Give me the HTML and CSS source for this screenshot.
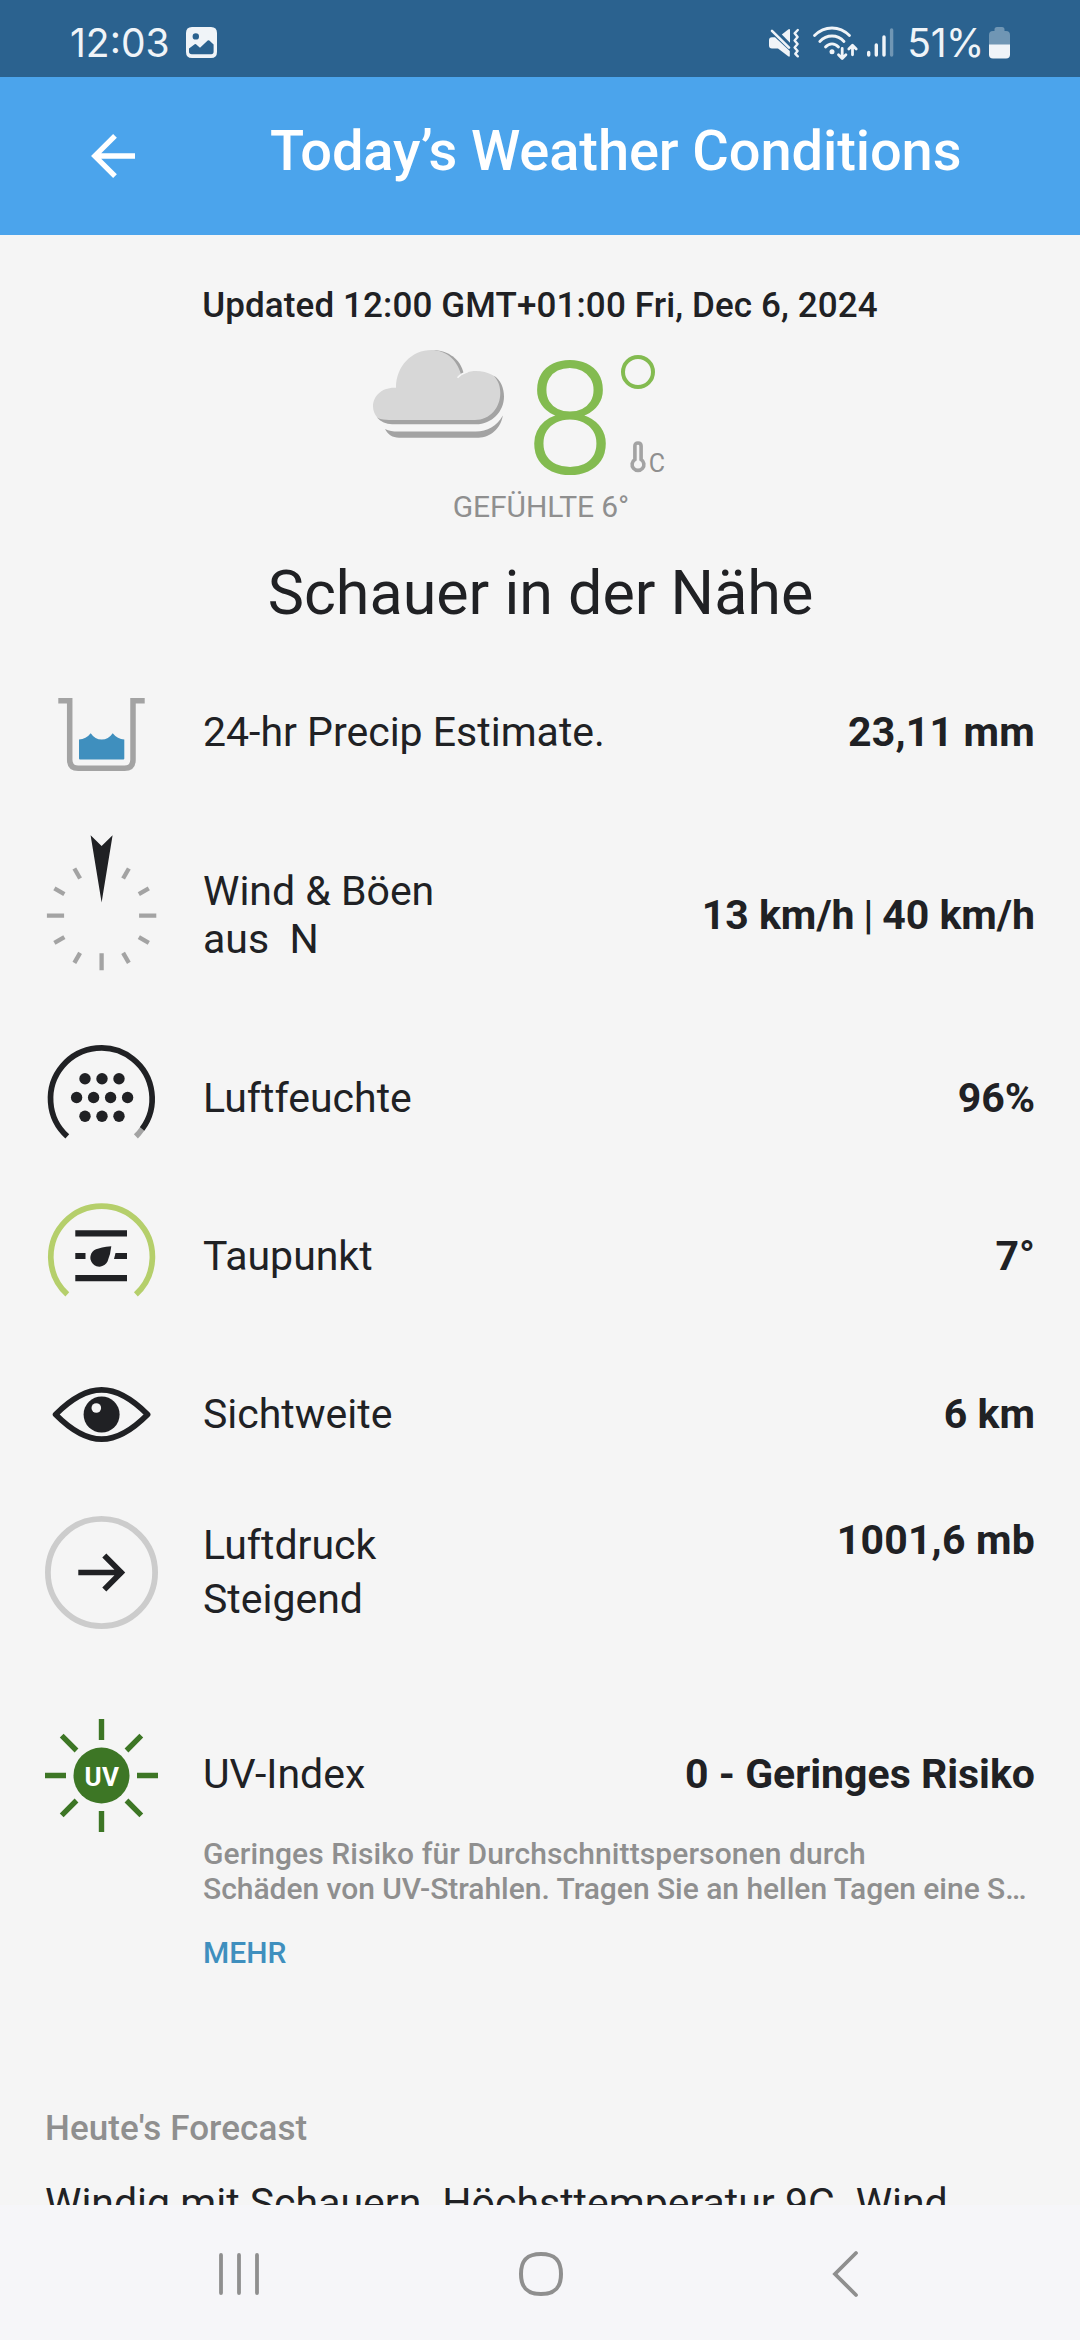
FILE: index.html
```html
<!DOCTYPE html>
<html lang="de">
<head>
<meta charset="utf-8">
<title>Today’s Weather Conditions</title>
<link rel="stylesheet" href="styles.css">
</head>
<body>
<div class="screen">
  <div class="status">
    <span class="status-text">12:03</span>
    <svg class="photo" width="31" height="31" viewBox="0 0 31 31">
      <path fill="#f0f4f8" fill-rule="evenodd" d="M6 0H25Q31 0 31 6V25Q31 31 25 31H6Q0 31 0 25V6Q0 0 6 0ZM9.8 6.2A3.2 3.2 0 1 0 9.8 12.6A3.2 3.2 0 1 0 9.8 6.2ZM3 21.5V24.5Q3 27.2 5.700 27.200H25.3Q27.600 27.200 27.600 24.500V17.5L23.3 13.6Q22.500 13 21.700 13.600L14 20.800L10 17.300Q9.400 16.800 8.700 17.300Z"/>
    </svg>
    <div class="status-right">
      <svg width="34" height="32" viewBox="0 0 34 32">
        <g fill="#f0f4f8"><path d="M5 10.300H8L22.800 24V29.500L21.500 29.500L11 21.500H5Q2 21.500 2 18.500V13.300Q2 10.300 5 10.300Z"/><path d="M14.800 7.600L21.500 2.300H23V15.800Z"/></g>
        <g fill="none" stroke="#f0f4f8" stroke-width="2.600" stroke-linecap="round" stroke-linejoin="round"><path d="M5 3.900L22 20.600"/><path d="M30.800 3L27.600 6.300L30.600 10L27.600 13.500L30.600 17L27.600 20.500L30.600 24L28.300 26.800L30.800 29.300" stroke-width="2.400"/></g>
      </svg>
      <svg class="wifi" width="46" height="36" viewBox="0 0 46 36">
        <g fill="none" stroke="#f0f4f8" stroke-width="2.800" stroke-linecap="round" stroke-linejoin="round"><path d="M2.500 10.600Q10 3 20 3T37.500 10.600"/><path d="M7.800 16.500Q13 11 20 11T32 16.500"/><path d="M13.500 22Q16.300 18.800 20 18.800T26.500 22"/><path d="M30.200 23.500V33M26.500 29.800L30.200 33.500L33.900 29.800M40.500 29.800V20.500M36.800 24L40.500 20.300L44.200 24"/></g>
        <circle cx="20" cy="26.800" r="2.500" fill="#f0f4f8"/>
      </svg>
      <svg class="signal" width="28" height="32" viewBox="0 0 28 32">
        <g stroke="#f0f4f8" stroke-width="3.400" stroke-linecap="round"><path d="M2.700 25.500V28M10.300 18V28M18 10V28"/><path d="M25.600 3V28" stroke="#7096b4"/></g>
      </svg>
      <span class="status-text percent">51%</span>
      <svg width="21" height="32" viewBox="0 0 21 32">
        <path fill="#7096b4" d="M5.500 2.500Q5.500 0 8 0H13Q15.500 0 15.500 2.500V4H17Q21 4 21 8V18H0V8Q0 4 4 4H5.500Z"/>
        <path fill="#f0f4f8" d="M0 17.500H21V27.500Q21 31.500 17 31.500H4Q0 31.500 0 27.500Z"/>
      </svg>
    </div>
  </div>

  <header class="appbar">
    <svg width="46" height="44" viewBox="0 0 46 44"><path fill="none" stroke="#fff" stroke-width="5.300" d="M25 1.800L4.800 22L25 42.200M4.800 22H45"/></svg>
    <h1>Today’s Weather Conditions</h1>
  </header>

  <main>
    <div class="updated">Updated 12:00 GMT+01:00 Fri, Dec 6, 2024</div>
    <div class="current">
      <svg class="cloud" width="134" height="92" viewBox="0 0 134 92">
        <path fill="#a3a3a3" d="M60 1C77 1 88.500 11 91.500 23.800L89 26L57 10Z"/>
        <path fill="#a3a3a3" d="M5 68.500C9 73 14 75.300 20 75.300H104C120 75.300 132 62.500 132 47.500C132 38.500 128.500 31.500 122.500 27L100 60Z"/>
        <path fill="#a3a3a3" d="M13 80C17 82.300 21 82.500 26 82.500H104C115 82.500 125 77 130.800 66.500C129 79 118.500 88.700 106.500 88.700H27C20.500 88.700 16 85.500 13 80Z"/>
        <path fill="#d7d7d7" d="M17 71H103C118 71 128.300 58.500 128.300 44C128.300 37 126 31 121.500 26.500C115.500 23.300 110 22 104 22C97 22 90 24.500 85.500 28.800L89 25.300C85 10.500 73.500 1 59.500 1C40 1 24 17 24 38.700C10 37.800 1 47 1 57.500C1 62 3 66.500 6.300 69.300C9 70.600 13 71 17 71Z"/>
        <path fill="none" stroke="#f5f5f5" stroke-width="1.600" d="M85.500 28.800Q89.500 24.500 96 22.600"/>
      </svg>
      <span class="temp">8</span>
      <div class="unit">
        <svg class="degree" width="34" height="34" viewBox="0 0 34 34"><circle cx="17" cy="17" r="15" fill="none" stroke="#83bb50" stroke-width="4"/></svg>
        <div class="scale">
          <svg width="16" height="32" viewBox="0 0 16 32"><path fill="none" stroke="#a3a3a3" stroke-width="3.600" d="M4.900 18.500V5Q4.900 2 8 2T11.100 5V18.500A5.900 5.900 0 1 1 4.900 18.500Z"/></svg>
          <span>C</span>
        </div>
      </div>
    </div>
    <div class="feels">GEFÜHLTE 6°</div>
    <h2>Schauer in der Nähe</h2>

    <section class="row">
      <svg class="icon" viewBox="0 0 113 113">
        <path fill="none" stroke="#a3a3a3" stroke-width="5.500" d="M13.300 24.800H24.700V83.800Q24.700 92.300 33.200 92.300H79.500Q88 92.300 88 83.800V24.800H99.700"/>
        <path fill="#3f8fbe" d="M34 63.500Q41 63.200 45.700 57.200Q50 63.500 56.700 63.500T67.700 57.200Q72.500 63.200 79.300 63.500V82.500Q79.300 83.500 78.300 83.500H35Q34 83.500 34 82.500Z"/>
      </svg>
      <div class="label">24-hr Precip Estimate.</div>
      <div class="value spaced">23,11 mm</div>
    </section>

    <section class="row wind">
      <svg class="icon compass" viewBox="0 0 113 162">
        <g stroke="#a3a3a3" stroke-width="4.300" transform="translate(56.600 81.700)">
          <path d="M-54.700 0H-37.500M37.500 0H54.700M0 37.500V54.500"/>
          <path d="M0 43V54.500" transform="rotate(30)"/><path d="M0 43V54.500" transform="rotate(60)"/>
          <path d="M0 43V54.500" transform="rotate(120)"/><path d="M0 43V54.500" transform="rotate(150)"/>
          <path d="M0 43V54.500" transform="rotate(210)"/><path d="M0 43V54.500" transform="rotate(240)"/>
          <path d="M0 43V54.500" transform="rotate(300)"/><path d="M0 43V54.500" transform="rotate(330)"/>
        </g>
        <path fill="#202124" d="M45.600 1.300L56.600 12L67.600 1.300L56.600 68.500Z"/>
      </svg>
      <div class="label">Wind &amp; Böen<br>aus&nbsp; N</div>
      <div class="value">13 km/h <span class="bar">|</span> 40 km/h</div>
    </section>

    <section class="row">
      <svg class="icon" viewBox="0 0 113 113">
        <g fill="none" stroke-width="5.700"><path stroke="#a3a3a3" d="M97.100 87A50.800 50.800 0 0 1 90.900 94.400"/><path stroke="#202124" d="M22.300 94.400A50.800 50.800 0 1 1 97.100 87"/></g>
        <g fill="#202124"><circle cx="40" cy="36.800" r="5.700"/><circle cx="57" cy="36.800" r="5.700"/><circle cx="74" cy="36.800" r="5.700"/><circle cx="31.600" cy="55.500" r="5.700"/><circle cx="48.600" cy="55.500" r="5.700"/><circle cx="65.600" cy="55.500" r="5.700"/><circle cx="82.600" cy="55.500" r="5.700"/><circle cx="40" cy="74.200" r="5.700"/><circle cx="57" cy="74.200" r="5.700"/><circle cx="74" cy="74.200" r="5.700"/></g>
      </svg>
      <div class="label">Luftfeuchte</div>
      <div class="value">96%</div>
    </section>

    <section class="row">
      <svg class="icon" viewBox="0 0 113 113">
        <path fill="none" stroke="#b5cf6b" stroke-width="5.700" d="M22.300 94.400A50.800 50.800 0 1 1 90.900 94.400"/>
        <g fill="#202124"><path d="M30.300 30.300H82V36.500H30.300ZM30.300 75H82V81.200H30.300ZM30.300 53H40.500V59H30.300ZM70.500 53H82V59H69Z"/><path d="M66.300 46.200Q65.500 55 62.500 61.500A9 9 0 1 1 51 49.300Q55.500 47.300 66.300 46.200Z"/></g>
      </svg>
      <div class="label">Taupunkt</div>
      <div class="value">7°</div>
    </section>

    <section class="row">
      <svg class="icon" viewBox="0 0 113 113">
        <path fill="none" stroke="#202124" stroke-width="5.700" stroke-linejoin="round" d="M10.600 56.500C27 40 41 31.900 56.600 31.900S86.200 40 102.600 56.500C86.200 73 72.200 81.200 56.600 81.200S27 73 10.600 56.500Z"/>
        <circle cx="56.600" cy="56.500" r="18" fill="#202124"/><circle cx="51.300" cy="50" r="4.800" fill="#f5f5f5"/>
      </svg>
      <div class="label">Sichtweite</div>
      <div class="value">6 km</div>
    </section>

    <section class="row pressure">
      <svg class="icon" viewBox="0 0 113 113">
        <circle cx="56.500" cy="56.500" r="53.600" fill="none" stroke="#ccc" stroke-width="5.800"/>
        <path fill="none" stroke="#202124" stroke-width="5.700" d="M33.300 56.500H75M59.300 39.500L76.200 56.500L59.300 73.500"/>
      </svg>
      <div class="label">Luftdruck<br>Steigend</div>
      <div class="value spaced">1001,6 mb</div>
    </section>

    <section class="row uv">
      <svg class="icon" viewBox="0 0 113 113">
        <circle cx="56.500" cy="56.500" r="28" fill="#3d7625"/>
        <g stroke="#3d7625" stroke-width="5.400"><path d="M56.500 0V21M56.500 92V113M0 56.500H21M92 56.500H113M16.700 16.700L31.500 31.500M81.500 81.500L96.300 96.300M96.300 16.700L81.500 31.500M31.500 81.500L16.700 96.300"/></g>
        <text class="uv-mark" x="57" y="66.500" text-anchor="middle">UV</text>
      </svg>
      <div class="label">UV-Index</div>
      <div class="value">0 - Geringes Risiko</div>
    </section>
    <div class="detail">
      <p class="line1">Geringes Risiko für Durchschnittspersonen durch</p>
      <p class="line2">Schäden von UV-Strahlen. Tragen Sie an hellen Tagen eine S…</p>
      <a>MEHR</a>
    </div>

    <h3>Heute's Forecast</h3>
    <p class="forecast">Windig mit Schauern. Höchsttemperatur 9C. Wind</p>
  </main>

  <nav>
    <svg width="40" height="44" viewBox="0 0 40 44"><path stroke="#8f8f8f" stroke-width="3.800" stroke-linecap="round" d="M2 3V41M20 3V41M38 3V41"/></svg>
    <svg class="home" width="44" height="44" viewBox="0 0 44 44"><path fill="none" stroke="#8f8f8f" stroke-width="4" d="M22 2C36 2 42 8 42 22S36 42 22 42S2 36 2 22S8 2 22 2Z"/></svg>
    <svg class="back" width="28" height="46" viewBox="0 0 28 46"><path fill="none" stroke="#8f8f8f" stroke-width="3.800" stroke-linecap="round" d="M24 2L3 23L24 44"/></svg>
  </nav>
</div>
</body>
</html>
```
FILE: styles.css
```css
* { box-sizing: border-box; }
body { margin: 0; font-family: Roboto, "Liberation Sans", sans-serif; background: #f5f5f5; color: #202124; }
h1, h2, h3, p { margin: 0; font-weight: 400; }
svg { display: block; flex: none; overflow: visible; }
.screen { width: 1080px; height: 2340px; display: flex; flex-direction: column; overflow: hidden; }

.status { height: 77px; flex: none; background: #2b628f; display: flex; align-items: center; padding: 8px 70px 0 70px; color: #f0f4f8; }
.status-text { font: 400 39px/46px Inter, sans-serif; }
.photo { margin-left: 16px; }
.status-right { margin-left: auto; display: flex; align-items: center; }
.wifi { margin-left: 11px; }
.signal { margin-left: 8px; }
.percent { margin-left: 13px; margin-right: 5px; letter-spacing: -0.4px; }

.appbar { height: 158px; flex: none; background: #4ba4ec; display: flex; align-items: center; padding-left: 90px; color: #fff; }
.appbar h1 { font-size: 56px; line-height: 66px; font-weight: 500; letter-spacing: -0.1px; margin-left: 134px; padding-bottom: 10px; white-space: nowrap; }

main { flex: 1; min-height: 0; overflow: hidden; padding: 46px 45px 0; }
.updated { text-align: center; font-size: 35px; line-height: 49px; font-weight: 500; letter-spacing: 0.12px; }
.current { height: 144px; display: flex; align-items: flex-start; padding-left: 327px; }
.cloud { margin-top: 19px; }
.temp { margin: 24px 0 0 20px; font-size: 158px; line-height: 130px; font-weight: 300; color: #83bb50; }
.unit { padding: 25px 0 0 7px; }
.scale { display: flex; align-items: flex-start; margin: 52px 0 0 9px; color: #8f8f8f; font-size: 25px; line-height: 30px; }
.scale span { margin: 8px 0 0 3px; }
.feels { text-align: center; font-size: 30px; line-height: 40px; color: #8f8f8f; letter-spacing: -0.1px; margin-top: 13px; padding-left: 2px; }
h2 { text-align: center; font-size: 61px; line-height: 72px; margin: 30px 0 24px; padding-left: 1px; }

.row { height: 158px; display: flex; align-items: center; font-size: 41px; line-height: 48px; }
.wind { height: 208px; }
.icon { width: 113px; height: 113px; }
.compass { height: 162px; }
.label { margin-left: 45px; }
.value { margin-left: auto; font-weight: 700; }
.spaced { letter-spacing: 0.2px; }
.bar { font-weight: 500; margin: 0 -1.5px; }
.pressure { line-height: 54px; }
.pressure .value { align-self: flex-start; line-height: 43px; margin-top: 26px; }
.uv { height: 184px; padding-top: 65px; }
.uv .label, .uv .value { padding-bottom: 3px; }
.uv-mark { font: 700 26px Roboto, sans-serif; letter-spacing: 0.5px; fill: #fff; }
.detail { padding: 1px 0 0 158px; font-size: 30px; line-height: 35px; font-weight: 500; color: #8f8f8f; white-space: nowrap; }
.detail p { font-weight: 500; }
.line1 { letter-spacing: 0.1px; }
.line2 { letter-spacing: -0.03px; }
.detail a { display: block; margin-top: 29px; color: #3f8fbe; }
h3 { font-size: 35px; line-height: 41px; font-weight: 500; color: #8f8f8f; margin-top: 138px; letter-spacing: 0.1px; }
.forecast { font-size: 41px; line-height: 48px; margin-top: 30px; white-space: nowrap; }

nav { height: 135px; flex: none; background: #f6f6f9; display: flex; align-items: center; padding: 2px 0 0 219px; }
.home { margin-left: 260px; }
.back { margin-left: 269px; }
```
